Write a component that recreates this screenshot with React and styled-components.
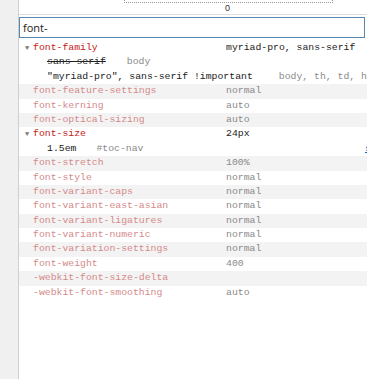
import React from "react";
import styled, { createGlobalStyle } from "styled-components";

const Global = createGlobalStyle`
  html, body { margin: 0; padding: 0; background: #fff; }
  body { width: 367px; height: 379px; overflow: hidden; }
`;

const Page = styled.div`
  display: flex;
  height: 379px;
  width: 367px;
`;

const Gutter = styled.div`
  width: 18px;
  flex: 0 0 18px;
  background: #f0f0f0;
  border-right: 1px solid #cfcfcf;
`;

const Main = styled.div`
  flex: 1;
  min-width: 0;
  display: flex;
  flex-direction: column;
  overflow: hidden;
`;

const BoxTail = styled.div`
  height: 14px;
  border-bottom: 1px solid #dcdcdc;
`;

const DottedEdge = styled.div`
  margin-left: 105px;
  width: 207px;
  height: 2px;
  border: 1px dotted #999;
  border-top: none;
`;

const ZeroLabel = styled.div`
  text-align: center;
  width: 207px;
  margin-left: 105px;
  font: 9px "Liberation Sans", Arial, sans-serif;
  color: #333;
  line-height: 10px;
`;

const Search = styled.div`
  margin: 2px 2px 0 0;
  height: 19px;
  border: 1px solid #5a86b4;
  font: 11px "Open Sans", "Liberation Sans", Arial, sans-serif;
  line-height: 19px;
  padding-left: 3px;
  color: #222;
`;

const List = styled.div`
  padding-top: 3px;
  font-family: "Liberation Mono", "DejaVu Sans Mono", monospace;
  font-size: 9.8px;
`;

const Row = styled.div`
  display: grid;
  grid-template-columns: 207px 1fr;
  height: 14.4px;
  line-height: 14.4px;
  white-space: nowrap;
  background: ${(p) => (p.$shaded ? "#f3f3f3" : "transparent")};
`;

const NameCell = styled.div`
  display: flex;
  align-items: center;
  padding-left: 6px;
  color: ${(p) => (p.$active ? "#c41a16" : "#d48a8a")};
`;

const Toggle = styled.span`
  width: 8px;
  flex: 0 0 8px;
  font-size: 7px;
  color: #777;
  line-height: 14.4px;
`;

const ValueCell = styled.div`
  color: ${(p) => (p.$active ? "#222" : "#8a8a8a")};
`;

const SubRow = styled.div`
  display: flex;
  height: 14.4px;
  line-height: 14.4px;
  white-space: nowrap;
  padding-left: 28px;
`;

const SubValue = styled.span`
  color: #222;
  text-decoration: ${(p) => (p.$struck ? "line-through" : "none")};
`;

const Selector = styled.span`
  color: #8a8a8a;
  margin-left: ${(p) => p.$gap}px;
`;

const SourceLink = styled.span`
  margin-left: auto;
  width: 2px;
  flex: 0 0 2px;
  overflow: hidden;
  color: #1a5fb4;
  text-decoration: underline;
`;

const props = [
  { name: "font-family", value: "myriad-pro, sans-serif", active: true, subs: [
    { v: "sans-serif", struck: true, sel: "body", gap: 21 },
    { v: "\"myriad-pro\", sans-serif !important", sel: "body, th, td, h1, h2, h3", gap: 26 },
  ] },
  { name: "font-feature-settings", value: "normal", shaded: true },
  { name: "font-kerning", value: "auto" },
  { name: "font-optical-sizing", value: "auto", shaded: true },
  { name: "font-size", value: "24px", active: true, subs: [
    { v: "1.5em", sel: "#toc-nav", gap: 20, link: true },
  ] },
  { name: "font-stretch", value: "100%", shaded: true },
  { name: "font-style", value: "normal" },
  { name: "font-variant-caps", value: "normal", shaded: true },
  { name: "font-variant-east-asian", value: "normal" },
  { name: "font-variant-ligatures", value: "normal", shaded: true },
  { name: "font-variant-numeric", value: "normal" },
  { name: "font-variation-settings", value: "normal", shaded: true },
  { name: "font-weight", value: "400" },
  { name: "-webkit-font-size-delta", value: "", shaded: true },
  { name: "-webkit-font-smoothing", value: "auto" },
];

export default function App() {
  const rows = [];
  props.forEach((p) => {
    rows.push({ type: "prop", p });
    (p.subs || []).forEach((s) => rows.push({ type: "sub", s }));
  });
  return (
    <>
      <Global />
      <Page>
        <Gutter />
        <Main>
          <BoxTail>
            <DottedEdge />
            <ZeroLabel>0</ZeroLabel>
          </BoxTail>
          <Search>font-</Search>
          <List>
            {rows.map((r, i) =>
              r.type === "prop" ? (
                <Row key={i} $shaded={r.p.shaded}>
                  <NameCell $active={r.p.active}>
                    <Toggle>{r.p.active ? "▼" : ""}</Toggle>
                    {r.p.name}
                  </NameCell>
                  <ValueCell $active={r.p.active}>{r.p.value}</ValueCell>
                </Row>
              ) : (
                <SubRow key={i}>
                  <SubValue $struck={r.s.struck}>{r.s.v}</SubValue>
                  <Selector $gap={r.s.gap}>{r.s.sel}</Selector>
                  {r.s.link && <SourceLink>style.css</SourceLink>}
                </SubRow>
              )
            )}
          </List>
        </Main>
      </Page>
    </>
  );
}
